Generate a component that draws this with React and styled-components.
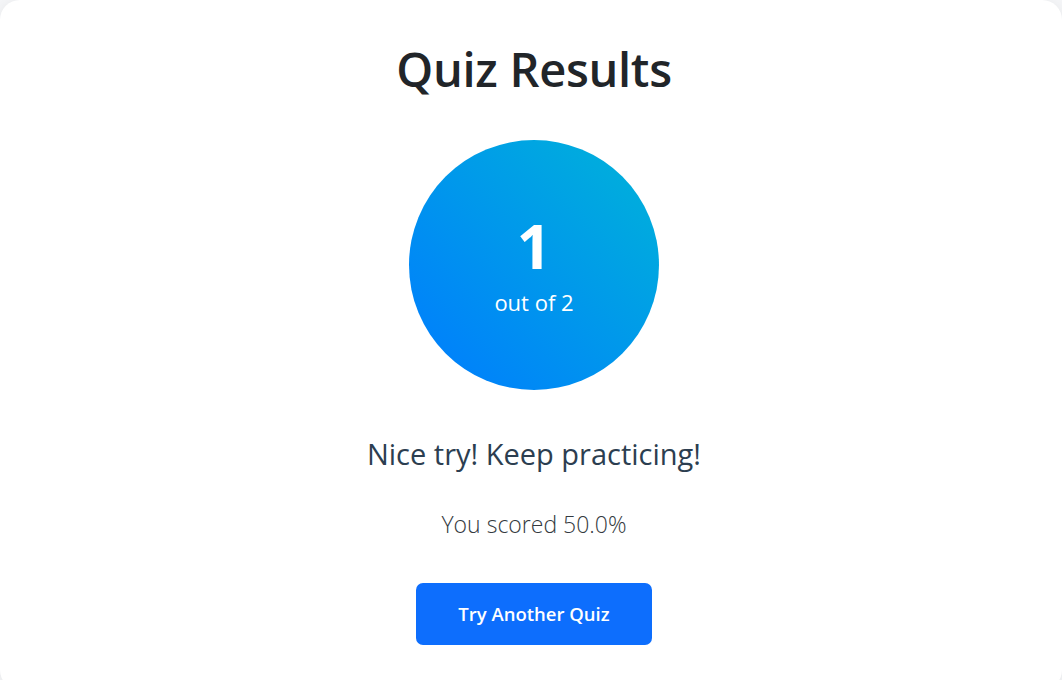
import React from 'react';
import styled, { createGlobalStyle } from 'styled-components';

const GlobalStyle = createGlobalStyle`
  html, body {
    margin: 0;
    padding: 0;
    background: #f4f5f7;
    font-family: 'Open Sans', 'Noto Sans', sans-serif;
    overflow: hidden;
  }
`;

const Card = styled.main`
  display: flex;
  flex-direction: column;
  align-items: center;
  background: #ffffff;
  border-radius: 20px;
  box-shadow: 0 2px 12px rgba(0, 0, 0, 0.06);
  min-height: 690px;
  padding: 41px 0 0 6px;
  box-sizing: border-box;
`;

const Title = styled.h1`
  margin: 0 0 43px;
  font-size: 47px;
  font-weight: 600;
  line-height: 1.2;
  color: #212529;
  letter-spacing: -0.3px;
`;

const ScoreCircle = styled.div`
  width: 250px;
  height: 250px;
  border-radius: 50%;
  background: linear-gradient(45deg, #007bff 0%, #00b4d8 100%);
  display: flex;
  flex-direction: column;
  align-items: center;
  justify-content: center;
  color: #ffffff;
`;

const ScoreValue = styled.div`
  font-size: 60px;
  font-weight: 700;
  line-height: 1;
`;

const ScoreTotal = styled.div`
  font-size: 22px;
  line-height: 1.2;
  margin-top: 13px;
`;

const Message = styled.p`
  margin: 47px 0 0;
  font-size: 29px;
  line-height: 1.2;
  color: #2c3e50;
`;

const Percent = styled.p`
  margin: 39px 0 0;
  font-size: 23px;
  font-weight: 300;
  line-height: 1.2;
  color: #343a40;
`;

const Button = styled.button`
  margin-top: 44px;
  width: 236px;
  height: 62px;
  border: none;
  border-radius: 7px;
  background: #0d6efd;
  color: #ffffff;
  font-family: inherit;
  font-size: 18.5px;
  font-weight: 600;
  cursor: pointer;
`;

export default function App() {
  const score = 1;
  const total = 2;
  return (
    <>
      <GlobalStyle />
      <Card>
        <Title>Quiz Results</Title>
        <ScoreCircle>
          <ScoreValue>{score}</ScoreValue>
          <ScoreTotal>out of {total}</ScoreTotal>
        </ScoreCircle>
        <Message>Nice try! Keep practicing!</Message>
        <Percent>You scored {((score / total) * 100).toFixed(1)}%</Percent>
        <Button>Try Another Quiz</Button>
      </Card>
    </>
  );
}
